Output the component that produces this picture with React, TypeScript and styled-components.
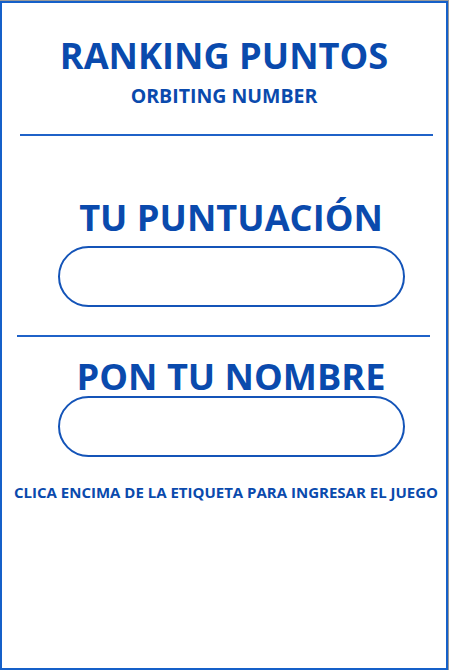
import React from 'react';
import styled, { createGlobalStyle } from 'styled-components';

const GlobalStyle = createGlobalStyle`
  html, body {
    margin: 0;
    padding: 0;
    background: #9a9a9a;
  }
  body {
    font-family: 'Open Sans', 'Liberation Sans', sans-serif;
  }
`;

const Frame = styled.main`
  box-sizing: border-box;
  margin-top: 1px;
  width: 448px;
  height: 669px;
  background: #ffffff;
  border: 2px solid #1560c9;
  display: flex;
  flex-direction: column;
  align-items: center;
`;

const Section = styled.section<{ nudge: number }>`
  align-self: stretch;
  display: flex;
  flex-direction: column;
  align-items: center;
  padding-left: ${({ nudge }) => nudge}px;
`;

const Title = styled.h1<{ mt: number }>`
  margin: ${({ mt }) => mt}px 0 0;
  font-size: 36.2px;
  line-height: 40px;
  font-weight: 700;
  color: #0a4aad;
`;

const Subtitle = styled.h2`
  margin: 8px 0 0;
  font-size: 19.5px;
  line-height: 26px;
  font-weight: 700;
  color: #0a4aad;
`;

const Divider = styled.hr<{ mt: number; shift: number }>`
  align-self: flex-start;
  box-sizing: border-box;
  width: 413px;
  height: 2px;
  border: none;
  margin: ${({ mt }) => mt}px 0 0 ${({ shift }) => shift}px;
  background: #1f62c8;
`;

const Field = styled.input<{ mt: number }>`
  box-sizing: border-box;
  width: 347px;
  height: 61px;
  margin-top: ${({ mt }) => mt}px;
  border: 2px solid #1454b8;
  border-radius: 31px;
  background: #ffffff;
  outline: none;
  padding: 0 24px;
  font-family: inherit;
  font-size: 18px;
  color: #0a4aad;
`;

const Hint = styled.p`
  margin: 25px 0 0 4px;
  font-size: 15px;
  line-height: 20px;
  font-weight: 700;
  color: #0a4aad;
  white-space: nowrap;
`;

function App() {
  return (
    <>
      <GlobalStyle />
      <Frame>
        <Title mt={32}>RANKING PUNTOS</Title>
        <Subtitle>ORBITING NUMBER</Subtitle>
        <Divider mt={25} shift={18} />
        <Section nudge={14}>
          <Title mt={61}>TU PUNTUACIÓN</Title>
          <Field mt={9} />
        </Section>
        <Divider mt={28} shift={15} />
        <Section nudge={14}>
          <Title mt={19}>PON TU NOMBRE</Title>
          <Field mt={0} />
        </Section>
        <Hint>CLICA ENCIMA DE LA ETIQUETA PARA INGRESAR EL JUEGO</Hint>
      </Frame>
    </>
  );
}

export default App;
